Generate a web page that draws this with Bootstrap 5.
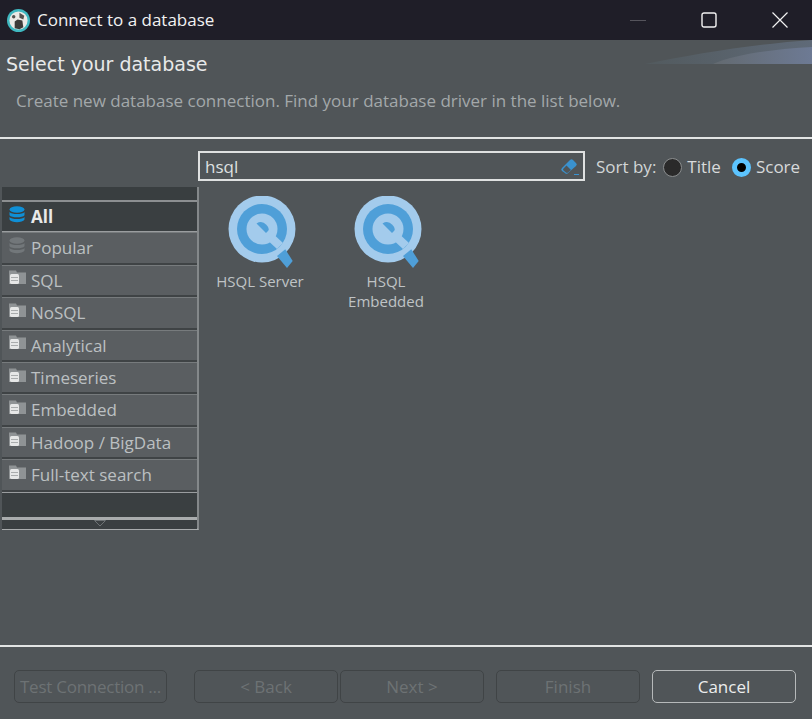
<!DOCTYPE html>
<html lang="en">
<head>
<meta charset="utf-8">
<title>Connect to a database</title>
<link rel="stylesheet" href="https://cdn.jsdelivr.net/npm/bootstrap@5.3.0/dist/css/bootstrap.min.css">
<style>
html,body{height:719px;overflow:hidden}
body{background:#505558;font-family:"Open Sans","Noto Sans",sans-serif;color:#d8dadb;font-size:17px}
.tbar{height:40px;background:#1f1e28;color:#f2f2f2;font-size:17px;padding-left:7px}
.tbar-title{margin-left:7px}
.tbar-btns{margin-left:auto;gap:55px;padding-right:24px}
.wiz-head{height:99px;border-bottom:2px solid #e2e4e4;position:relative}
.wiz-banner{position:absolute;right:0;top:0;width:167px;height:24px}
.wiz-title{font-family:"DejaVu Sans",sans-serif;font-size:19px;line-height:24px;padding:12px 0 0 6px;color:#e8e9e9}
.wiz-desc{font-size:17px;line-height:22px;padding:14px 0 0 16px;color:#a3a8aa;white-space:nowrap}
.filter-row{padding:12px 0 0 198px;height:48px}
.search-box{width:387px;height:30px;border:2px solid #dfe1e1;padding:1px 5px 0;font-size:17px;color:#dfe1e1;line-height:26px}
.search-box svg{margin-left:auto;margin-right:-2px}
.sort-box{height:31px;padding-top:1px}
.sort-lbl{margin-left:11px;color:#d2d5d6}
.rdo{width:19px;height:19px;border-radius:50%;display:inline-block;margin-left:7px;margin-right:5px;flex:none}
.rdo-off{background:#2a2a2a;border:1px solid #8a8d8e}
.rdo-on{background:#000;border:5px solid #5cc4ff;margin-left:11px}
.pane{height:458px}
.cat-col{width:197px;margin-left:2px;height:343px;border-right:2px solid #84888a;border-bottom:2px solid #a9acad}
.cat-top{height:13px;background:#393e40}
.cat-row{height:32.4px;background:#5a5e61;border-bottom:2px solid #3f4345;border-top:1px solid #777b7d;color:#bcc0c2;padding-left:7px;gap:6px;font-size:17px}
.cat-row svg{margin-bottom:5px;overflow:visible}
.cat-row span{margin-left:-1px}
.cat-active{background:#3a3f41;border-bottom:1px solid #9a9d9f;border-top:2px solid #8c8f91;color:#e8e9e9;font-weight:700}
.cat-fill{height:28px;background:#3a3f41;border-top:1px solid #9a9d9f;border-bottom:3px solid #a9acad}
.cat-more{height:9px;background:#3a3f41}
.drv-list{padding:9px 0 0 8px;gap:20px}
.drv-item{width:106px;text-align:center;font-size:15px;line-height:20px;color:#bfc3c5;white-space:normal}
.drv-item svg{display:block;margin:0 0 2px 21px}
.wiz-foot{border-top:2px solid #e2e4e4;padding:23px 0 0 14px}
.wbt{width:144px;height:33px;padding:0;background:transparent;border:1px solid #404446;border-radius:5px;font-size:17px;line-height:30px;color:#6d7274}
.wbt:disabled{color:#6d7274;border-color:#404446;background:transparent;opacity:1}
.wbt-test{width:153px;margin-right:27px;white-space:nowrap;overflow:hidden;letter-spacing:-.25px}
.wbt-next{margin-left:2px}
.wbt-fin{margin-left:12px}
.wbt-can{margin-left:12px;border-color:#b6b9ba;color:#eceded}
.wbt-can:hover{color:#eceded;border-color:#b6b9ba}
</style>
</head>
<body>
<div class="tbar d-flex align-items-center">
  <svg width="23" height="23" viewBox="0 0 24 24"><circle cx="12" cy="12" r="12" fill="#3fb8c0"/><circle cx="12" cy="12" r="9.500" fill="#eceae6"/><path d="M8 20v-7l3-2 5 1 1 7-4 2z" fill="#3c3a38"/><circle cx="7" cy="8" r="1.800" fill="#55524f"/><path d="M13 4l5 3-1 4-4-2z" fill="#55524f"/></svg>
  <span class="tbar-title">Connect to a database</span>
  <div class="tbar-btns d-flex align-items-center">
    <svg width="16" height="16"><rect y="8" width="16" height="1" fill="#55545c"/></svg>
    <svg width="16" height="16"><rect x="1" y="1" width="14" height="14" rx="2" fill="none" stroke="#f2f2f2" stroke-width="1.400"/></svg>
    <svg width="16" height="16"><path d="M.5.5l15 15M15.500.5l-15 15" stroke="#f2f2f2" stroke-width="1.200"/></svg>
  </div>
</div>
<div class="wiz-head">
  <svg class="wiz-banner" viewBox="0 0 167 24"><defs><linearGradient id="bnr" x1="0" x2="1" y1="0" y2="0"><stop offset="0" stop-color="#525a5e"/><stop offset="1" stop-color="#5f6a78"/></linearGradient><linearGradient id="bnr2" x1="0" x2="1" y1="0" y2="0"><stop offset="0" stop-color="#636a70"/><stop offset="1" stop-color="#6d7a94"/></linearGradient></defs><path d="M0 24C50 14 110 4 167 0V24Z" fill="url(#bnr)"/><path d="M68 24C90 14 130 9 167 7V24Z" fill="url(#bnr2)"/></svg>
  <div class="wiz-title">Select your database</div>
  <div class="wiz-desc">Create new database connection. Find your database driver in the list below.</div>
</div>
<div class="filter-row d-flex align-items-start">
  <div class="search-box d-flex align-items-center"><span>hsql</span>
    <svg width="20" height="19" viewBox="0 0 20 19"><path d="M2 11l8-8a2 2 0 0 1 3 0l3 3a2 2 0 0 1 0 3l-8 7a2 2 0 0 1-3 0l-3-2a2 2 0 0 1 0-3z" fill="#3a92cf"/><path d="M3.500 11.500l3-3 4.500 4.500-3 2.500q-1 .8-2 0l-2.500-2q-.9-1 0-2z" fill="#505558"/><path d="M14 17.500h5" stroke="#3a92cf"/></svg>
  </div>
  <div class="sort-box d-flex align-items-center">
    <span class="sort-lbl">Sort by:</span><span class="rdo rdo-off"></span><span>Title</span><span class="rdo rdo-on"></span><span>Score</span>
  </div>
</div>
<div class="pane d-flex">
  <div class="cat-col flex-none">
    <div class="cat-top"></div>
    <div class="cat-row cat-active d-flex align-items-center"><svg width="16" height="17" viewBox="0 0 16 17"><use href="#dbs" fill="#0f8fd6"/></svg><span class="ms-0">All</span></div>
    <div class="cat-row d-flex align-items-center"><svg width="16" height="17" viewBox="0 0 16 17"><use href="#dbs" fill="#72777a"/></svg><span class="ms-0">Popular</span></div>
    <div class="cat-row d-flex align-items-center"><svg width="17" height="15" viewBox="0 0 17 15"><use href="#fld"/></svg><span>SQL</span></div>
    <div class="cat-row d-flex align-items-center"><svg width="17" height="15" viewBox="0 0 17 15"><use href="#fld"/></svg><span>NoSQL</span></div>
    <div class="cat-row d-flex align-items-center"><svg width="17" height="15" viewBox="0 0 17 15"><use href="#fld"/></svg><span>Analytical</span></div>
    <div class="cat-row d-flex align-items-center"><svg width="17" height="15" viewBox="0 0 17 15"><use href="#fld"/></svg><span>Timeseries</span></div>
    <div class="cat-row d-flex align-items-center"><svg width="17" height="15" viewBox="0 0 17 15"><use href="#fld"/></svg><span>Embedded</span></div>
    <div class="cat-row d-flex align-items-center"><svg width="17" height="15" viewBox="0 0 17 15"><use href="#fld"/></svg><span>Hadoop / BigData</span></div>
    <div class="cat-row d-flex align-items-center"><svg width="17" height="15" viewBox="0 0 17 15"><use href="#fld"/></svg><span>Full-text search</span></div>
    <div class="cat-fill"></div>
    <div class="cat-more d-flex justify-content-center"><svg width="12" height="7" viewBox="0 0 12 7"><path d="M.5.500h11L6 6z" fill="none" stroke="#6d7274"/></svg></div>
  </div>
  <div class="drv-list d-flex align-items-start">
    <div class="drv-item"><svg width="70" height="73" viewBox="0 0 70 73"><use href="#hsq"/></svg>HSQL Server</div>
    <div class="drv-item"><svg width="70" height="73" viewBox="0 0 70 73"><use href="#hsq"/></svg>HSQL Embedded</div>
  </div>
</div>
<div class="wiz-foot d-flex">
  <button class="btn wbt wbt-test" disabled>Test Connection ...</button>
  <button class="btn wbt" disabled>&lt; Back</button>
  <button class="btn wbt wbt-next" disabled>Next &gt;</button>
  <button class="btn wbt wbt-fin" disabled>Finish</button>
  <button class="btn wbt wbt-can">Cancel</button>
</div>
<svg width="0" height="0" class="d-block"><defs>
<g id="dbs"><ellipse cx="8" cy="3.500" rx="7.500" ry="3.300"/><path d="M.5 6c2 2.800 13 2.800 15 0v3.200c-2 2.800-13 2.800-15 0z"/><path d="M.5 11c2 2.800 13 2.800 15 0v2.500c-2 3.500-13 3.500-15 0z"/></g>
<g id="fld"><path d="M0 .500h7l1 2h9V14H0z" fill="#8f9395"/><rect x="1" y="4" width="9" height="10" rx="1.500" fill="#e6e7e7"/><path d="M2 7.500h7M2 10.500h7" stroke="#a9acad"/></g>
<g id="hsq">
  <circle cx="34" cy="33" r="33.500" fill="#a3cbec"/>
  <circle cx="34" cy="33" r="25" fill="#4f9fd8"/>
  <circle cx="34" cy="33" r="15.500" fill="#a3cbec"/>
  <path d="M28.500 27.500A8 8 0 0 1 39.500 38.500Z" fill="#4f9fd8"/>
  <path d="M35 40l6-6 14 13-6 6z" fill="#a3cbec"/>
  <path d="M49 60l8.300-6.700 7.400 11.700-5.700 7z" fill="#4f9fd8"/>
</g></defs></svg>
<script src="https://cdn.jsdelivr.net/npm/bootstrap@5.3.0/dist/js/bootstrap.bundle.min.js"></script>
</body>
</html>
